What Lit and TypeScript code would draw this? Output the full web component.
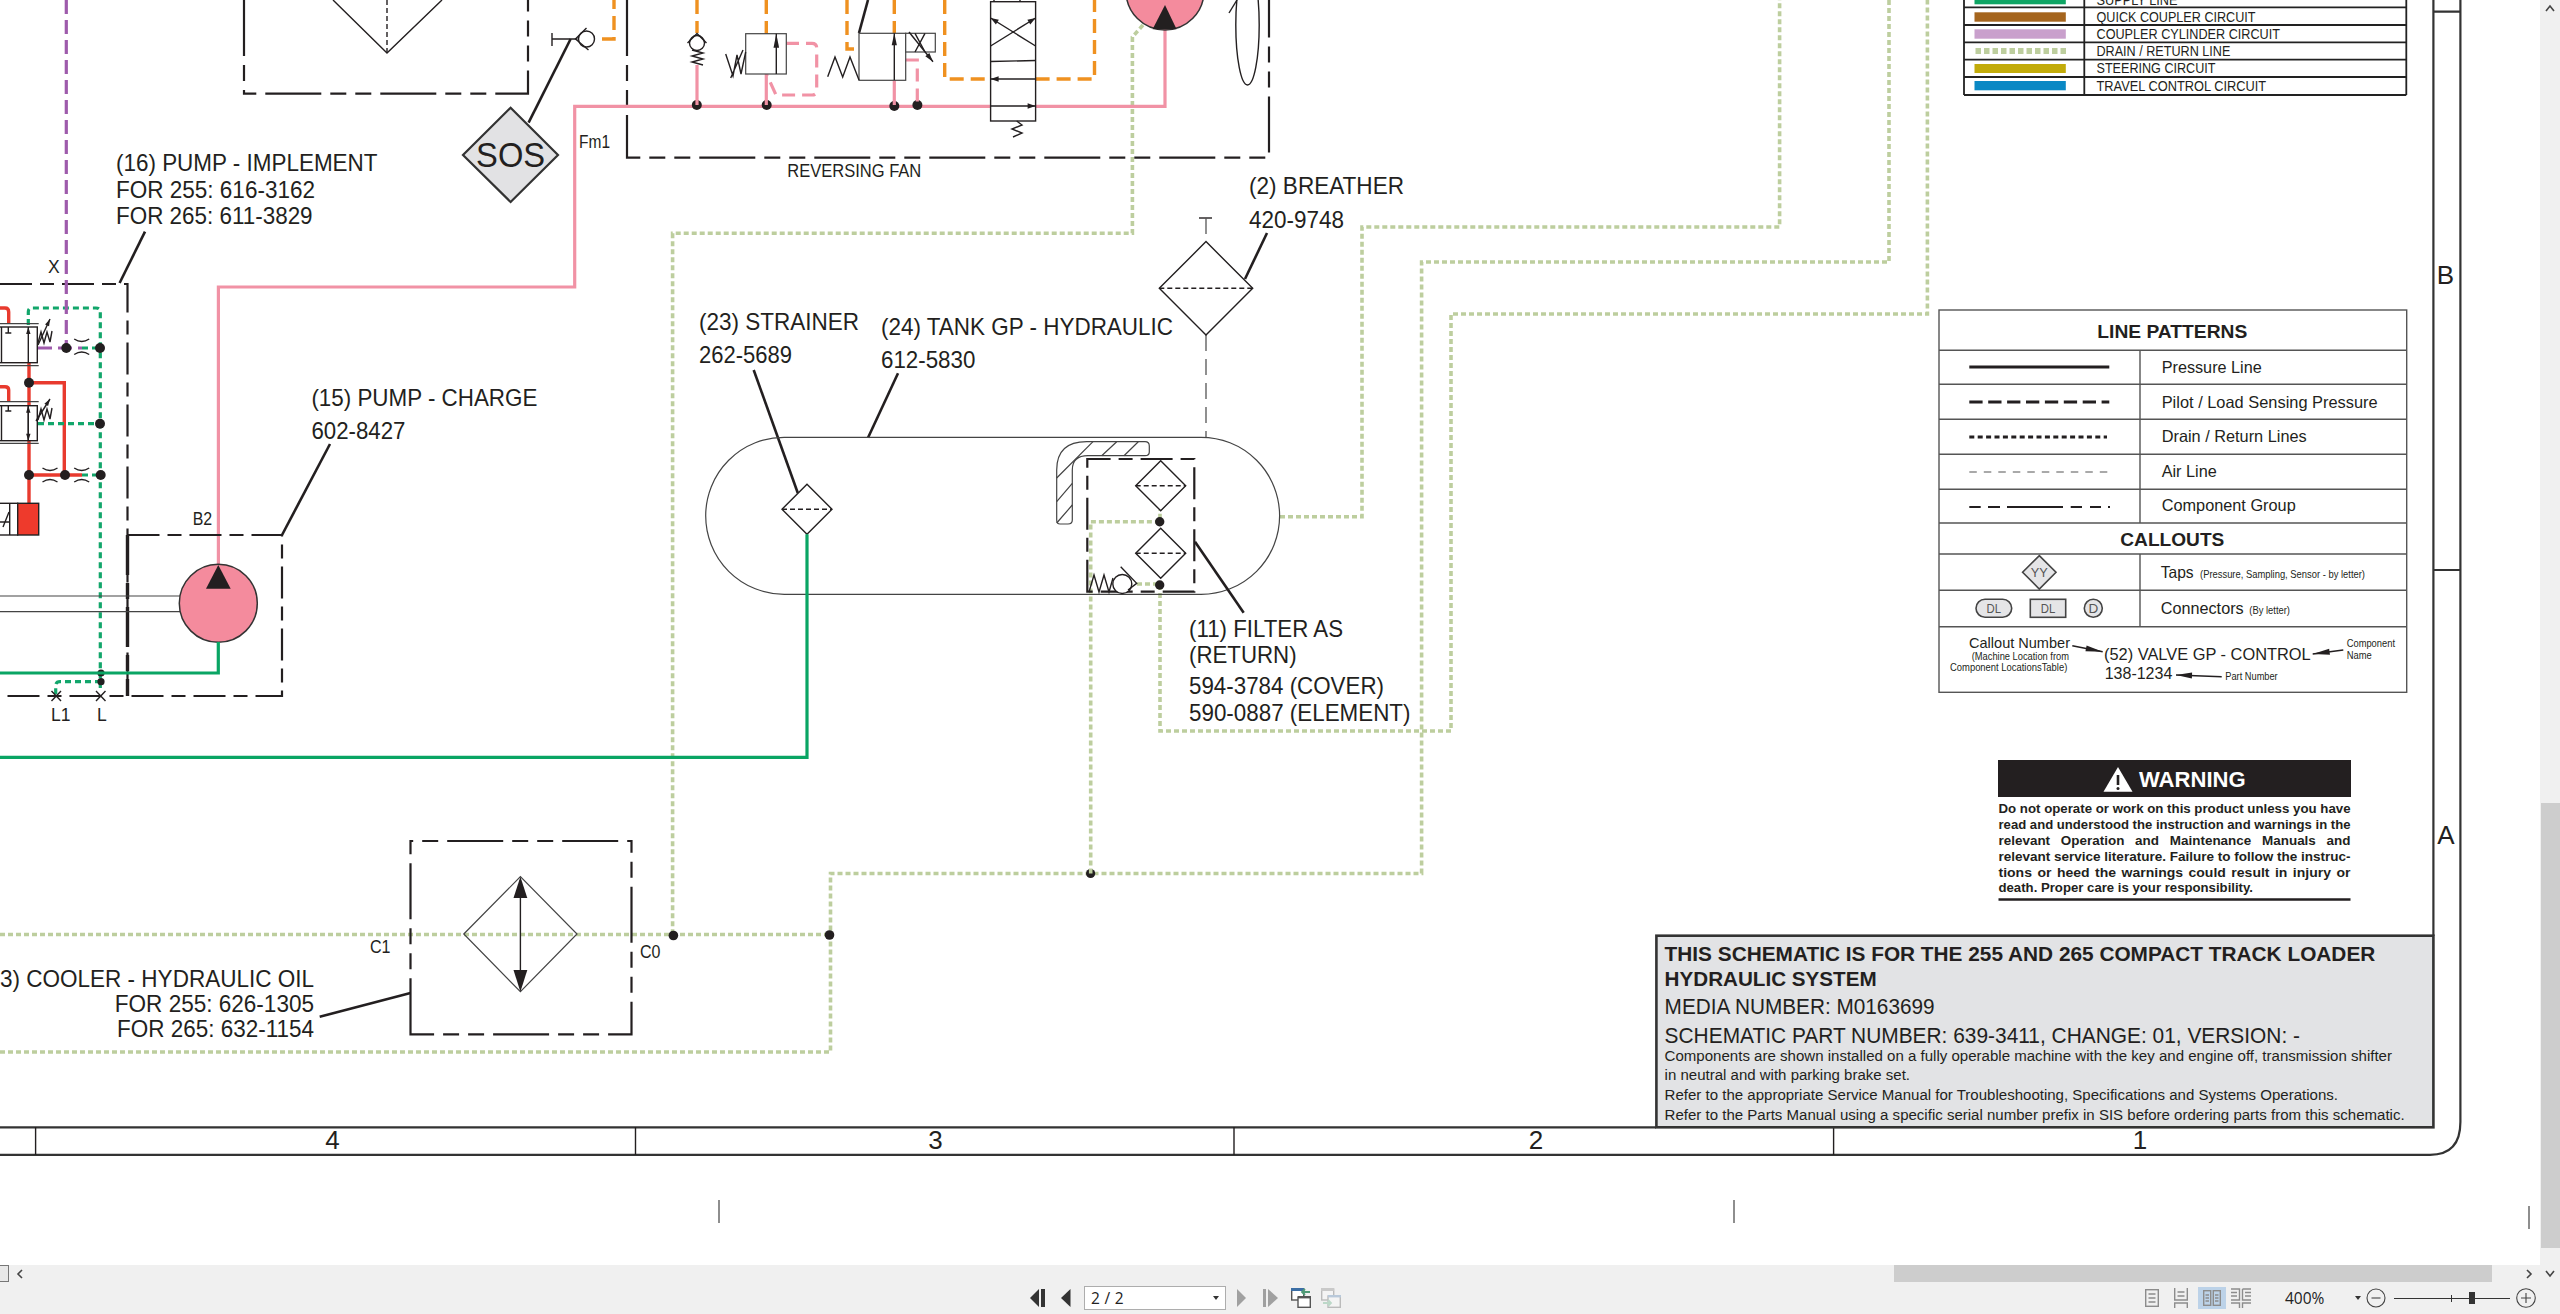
import { LitElement, css, html, svg } from 'lit';
import { customElement } from 'lit/decorators.js';
import { ifDefined } from 'lit/directives/if-defined.js';

// small drawing helpers, everything on the sheet is in page pixels
const p = (d: string, cls: string) => svg`<path class=${cls} d=${d}></path>`;
const dot = (x: number, y: number, r = 5) => svg`<circle class="dot" cx=${x} cy=${y} r=${r}></circle>`;
const tri = (points: string, cls = 'solid') => svg`<polygon class=${cls} points=${points}></polygon>`;
const t = (x: number, y: number, text: string, cls: string, len?: number) =>
  svg`<text class=${cls} x=${x} y=${y} textLength=${ifDefined(len)} lengthAdjust="spacingAndGlyphs">${text}</text>`;

const head = (tx: number, ty: number, fx: number, fy: number, len = 9, half = 2.8) => {
  const d = Math.hypot(tx - fx, ty - fy);
  const ux = (tx - fx) / d;
  const uy = (ty - fy) / d;
  const bx = tx - ux * len;
  const by = ty - uy * len;
  return tri(`${tx},${ty} ${bx - uy * half},${by + ux * half} ${bx + uy * half},${by - ux * half}`);
};

const arrow = (tx: number, ty: number, fx: number, fy: number, len = 9, half = 2.8) => svg`
  ${p(`M${fx} ${fy} L${tx} ${ty}`, 'ink')}${head(tx, ty, fx, fy, len, half)}`;

const diamond = (cx: number, cy: number, hw: number, hh: number) => svg`
  ${p(`M${cx - hw} ${cy} L${cx} ${cy - hh} L${cx + hw} ${cy} L${cx} ${cy + hh} Z`, 'ink white')}
  ${p(`M${cx - hw} ${cy} L${cx + hw} ${cy}`, 'ink-dash')}`;

const orifice = (x: number, top: number, bottom: number) =>
  p(`M${x - 7.5} ${top} Q${x} ${top + 5} ${x + 7.5} ${top} M${x - 7.5} ${bottom} Q${x} ${bottom - 5} ${x + 7.5} ${bottom}`, 'ink');

const COLOR_ROWS = [
  { y: 12.3, h: 9.4, cls: 'sw-brown', text: 'QUICK COUPLER CIRCUIT', base: 21.7, len: 159 },
  { y: 29.3, h: 9.4, cls: 'sw-lilac', text: 'COUPLER CYLINDER CIRCUIT', base: 38.7, len: 183.5 },
  { y: 64, h: 9, cls: 'sw-steer', text: 'STEERING CIRCUIT', base: 73, len: 119 },
  { y: 81, h: 9.3, cls: 'sw-travel', text: 'TRAVEL CONTROL CIRCUIT', base: 91, len: 169.6 },
];

const WARNING_LINES = [
  { text: 'Do not operate or work on this product unless you have', base: 813, len: 352, cls: 'warn-txt' },
  { text: 'read and understood the instruction and warnings in the', base: 829, len: 352, cls: 'warn-txt' },
  { text: 'relevant Operation and Maintenance Manuals and', base: 844.5, len: 352, cls: 'warn-txt wide' },
  { text: 'relevant service literature. Failure to follow the instruc-', base: 860.5, len: 352, cls: 'warn-txt' },
  { text: 'tions or heed the warnings could result in injury or', base: 876.5, len: 352, cls: 'warn-txt mid-wide' },
  { text: 'death. Proper care is your responsibility.', base: 892, len: 254.5, cls: 'warn-txt' },
];

@customElement('schematic-sheet')
export class SchematicSheet extends LitElement {
  static override styles = css`
    :host {
      display: block;
      flex: 1;
      min-width: 0;
      background: #fff;
    }

    svg {
      display: block;
    }

    text {
      font-family: 'Liberation Sans', Arial, sans-serif;
      fill: #231f20;
    }

    path {
      fill: none;
    }

    .callout { font-size: 24px; }
    .port { font-size: 17.5px; }
    .sos { font-size: 35px; text-anchor: middle; }
    .end { text-anchor: end; }
    .mid { text-anchor: middle; }
    .zone { font-size: 26px; text-anchor: middle; }
    .row-txt { font-size: 14.2px; }
    .lp-title { font-size: 18px; font-weight: 700; text-anchor: middle; }
    .lp-txt { font-size: 16.5px; }
    .tiny { font-size: 10.4px; }
    .tap { font-size: 13.5px; text-anchor: middle; fill: #555; }
    .call-sm { font-size: 14.6px; }
    .call-md { font-size: 17px; }
    .title-b { font-size: 21px; font-weight: 700; }
    .title-n { font-size: 21.5px; }
    .title-s { font-size: 15.3px; }
    .warn-head { font-size: 22px; font-weight: 700; fill: #fff; }
    .warn-txt { font-size: 13.4px; font-weight: 700; }
    .wide { word-spacing: 7px; }
    .mid-wide { word-spacing: 1.5px; }

    .ink { stroke: #231f20; stroke-width: 1.4; }
    .ink-thin { stroke: #444; stroke-width: 1.2; }
    .ink-dash { stroke: #231f20; stroke-width: 1.4; stroke-dasharray: 5 3; }
    .air { stroke: #555; stroke-width: 1.3; stroke-dasharray: 16 8; }
    .white { fill: #fff; }
    .leader { stroke: #231f20; stroke-width: 2.6; }
    .group { stroke: #231f20; stroke-width: 2.2; stroke-dasharray: 56 9 16 9 16 9; }
    .group-short { stroke: #231f20; stroke-width: 2.2; stroke-dasharray: 32 8 14 8; }
    .group-heavy { stroke: #231f20; stroke-width: 3.4; stroke-dasharray: 40 8 16 8; }
    .frame { stroke: #333; stroke-width: 2.2; }
    .grid { stroke: #555; stroke-width: 1.4; }
    .tbl { stroke: #222; stroke-width: 1.8; }

    .pink { stroke: #f192a5; stroke-width: 3.2; }
    .pink-dash { stroke: #f192a5; stroke-width: 3.2; stroke-dasharray: 13 7; }
    .orange-dash { stroke: #ef9120; stroke-width: 3.4; stroke-dasharray: 14 7; }
    .purple-dash { stroke: #9e5bab; stroke-width: 3.2; stroke-dasharray: 14 6; }
    .green { stroke: #0aa564; stroke-width: 3.2; }
    .green-dot { stroke: #12a66b; stroke-width: 3.2; stroke-dasharray: 6 4; }
    .red { stroke: #e83a2e; stroke-width: 3.4; }
    .drain { stroke: #bdce9e; stroke-width: 3.6; stroke-dasharray: 5 3; }

    .dot, .solid { fill: #231f20; }
    .pump { fill: #f48b9d; stroke: #333; stroke-width: 1.5; }
    .red-box { fill: #ee3a2c; stroke: #222; stroke-width: 1.4; }
    .grey-box { fill: #e2e2e4; stroke: #333; stroke-width: 2.2; }
    .call-box { fill: #e5e5e7; stroke: #444; stroke-width: 1.6; }
    .block { fill: #e2e3e5; stroke: #333; stroke-width: 2.6; }
    .warn-bg { fill: #231f20; }
    .warn-sign { fill: #fff; }

    .sw-green { fill: #0fa564; }
    .sw-brown { fill: #a5651e; }
    .sw-lilac { fill: #c9a0cc; }
    .sw-steer { fill: #c2ab0a; }
    .sw-travel { fill: #0a88c4; }

    .lg-pressure { stroke: #231f20; stroke-width: 3.2; }
    .lg-pilot { stroke: #231f20; stroke-width: 3; stroke-dasharray: 13.3 5.6; }
    .lg-drain { stroke: #231f20; stroke-width: 3; stroke-dasharray: 5 3.4; }
    .lg-air { stroke: #555; stroke-width: 1.1; stroke-dasharray: 7.5 7; }
    .lg-group { stroke: #231f20; stroke-width: 2.2; }
    .lg-dots { stroke: #bdce9e; stroke-width: 6; stroke-dasharray: 5.5 3; }
  `;

  private upperCircuits() {
    return svg`
      ${p('M244 0 L244 93.7 L528 93.7 L528 0', 'group')}
      ${p('M333 0 L387 53 L442 0', 'ink')}
      ${p('M387 0 L387 53', 'ink-dash')}

      ${p('M552 33 L552 46 M552 39 L577.5 39', 'ink')}
      <circle class="ink white" cx="586.5" cy="39" r="8"></circle>
      ${p('M586.5 28 L575.5 39 L588.5 50', 'ink')}
      ${p('M602 39 L614 39 L614 0', 'orange-dash')}
      ${p('M570.6 39 L528.6 122.7', 'leader')}
      ${p('M510.6 107.7 L558 155 L510.6 202 L463 155 Z', 'grey-box')}
      ${t(510.6, 167, 'SOS', 'sos', 69)}
      ${t(579, 148, 'Fm1', 'port', 31)}

      ${p('M627 0 L627 157.7 L1269 157.7 L1269 0', 'group')}
      ${t(787.3, 176.7, 'REVERSING FAN', 'port', 134)}

      ${p('M218.4 565 L218.4 287 L574.7 287 L574.7 106.4 L990.6 106.4', 'pink')}
      ${p('M1035.6 106.4 L1165 106.4 L1165 30', 'pink')}
      ${dot(696.8, 105)}${dot(766.7, 105)}${dot(894.3, 106)}${dot(917.4, 105)}

      <!-- check valve -->
      ${p('M697 0 L697 33', 'orange-dash')}
      ${p('M697 105 L697 65', 'pink')}
      ${p('M692 50 L703 53 L692 56 L703 59 L692 62 L703 65', 'ink')}
      <circle class="ink white" cx="697" cy="43" r="7.5"></circle>
      ${p('M687.5 43 L697 33.5 L706.5 43', 'ink')}

      <!-- relief valve -->
      ${p('M766.3 0 L766.3 34', 'orange-dash')}
      ${p('M766.3 74 L766.3 105', 'pink')}
      ${p('M786 43.3 L812 43.3 Q816.7 43.3 816.7 48 L816.7 90 Q816.7 95 812 95 L776 95 L767 75', 'pink-dash')}
      <rect class="ink-thin white" x="745.7" y="33.7" width="40.6" height="40.3"></rect>
      ${arrow(776.3, 33.7, 776.3, 74, 14, 2.8)}
      ${p('M725.7 54 L733 76 L737 55 L741 74 L745.7 52 M730.7 78 L743 50', 'ink')}

      <!-- solenoid valve -->
      ${p('M847 0 L847 49 L859 49', 'orange-dash')}
      ${p('M894.3 0 L894.3 33', 'orange-dash')}
      ${p('M894.3 80 L894.3 105', 'pink')}
      ${p('M905.7 60 L917.3 60 L917.3 105', 'pink-dash')}
      ${p('M859 33 L868 0', 'leader')}
      <rect class="ink-thin white" x="859" y="33.3" width="46.7" height="47"></rect>
      ${arrow(894.3, 33.3, 894.3, 80, 12, 2.6)}
      ${p('M827.7 76.7 L835 57 L842.7 77 L850 57 L859 80', 'ink')}
      <rect class="ink-thin white" x="905.7" y="33.3" width="29.6" height="18.7"></rect>
      ${p('M915 33.3 L925 52 M925 33.3 L915 52', 'ink')}
      ${arrow(933, 61.7, 909, 32, 9, 2.6)}

      <!-- directional valve -->
      ${p('M944.7 0 L944.7 79 L990.6 79', 'orange-dash')}
      ${p('M1035.6 79 L1094.5 79 L1094.5 0', 'orange-dash')}
      <rect class="ink white" x="990.6" y="1.7" width="45" height="119.3"></rect>
      ${p('M990.6 61.5 L1035.6 60.5', 'ink')}
      ${arrow(1035.6, 18, 990.6, 46, 8, 2.8)}
      ${arrow(990.6, 18, 1035.6, 46, 8, 2.8)}
      ${arrow(990.6, 79, 1035.6, 79, 8, 2.8)}
      ${arrow(1035.6, 106, 990.6, 106, 8, 2.8)}
      ${p('M994 1.7 V0 M1020 1.7 V0', 'ink')}
      ${p('M1016.7 121 L1022 125 L1012 129 L1022 133 L1013 137', 'ink')}

      <!-- fan motor pump and fan -->
      <circle class="pump" cx="1165" cy="-9" r="39"></circle>
      ${tri('1165,5 1152.6,29.3 1176.6,29.3')}
      <ellipse class="ink" fill="none" cx="1247.5" cy="25" rx="11.7" ry="60"></ellipse>
      ${p('M1229 13 L1237 0', 'ink')}
    `;
  }

  private pumpBlock() {
    return svg`
      ${p('M0 284 L127.5 284 L127.5 696', 'group-short')}
      ${p('M127.5 535 L282 535 L282 696 L0 696', 'group-short')}
      ${p('M127.5 535 L127.5 696', 'group-heavy')}
      ${p('M145 231.7 L119.6 283', 'leader')}
      ${p('M282 535 L330 444', 'leader')}

      ${p('M0 308 L5 308 Q8.7 308 8.7 312 L8.7 323', 'red')}
      ${p('M0 386.7 L5 386.7 Q8.7 386.7 8.7 390 L8.7 402', 'red')}
      ${p('M29 362 L29 405 M29 441 L29 503', 'red')}
      ${p('M29 382.7 L64.3 382.7 L64.3 475', 'red')}
      ${p('M29 475 L82 475', 'red')}

      ${p('M28.3 325 L28.3 312 Q28.3 308 32 308 L96 308 Q100.3 308 100.3 312 L100.3 688', 'green-dot')}
      ${p('M38 423.7 L100 423.7', 'green-dot')}
      ${p('M82 348 L100 348', 'green-dot')}
      ${p('M82 475 L100 475', 'green-dot')}
      ${p('M101 681.7 L60 681.7 Q55.7 681.7 55.7 686 L55.7 696', 'green-dot')}
      ${p('M66.3 0 L66.3 348', 'purple-dash')}
      ${p('M38 348 L82 348', 'purple-dash')}

      ${p('M0 323.7 L38.7 323.7 M0 365.7 L38.7 365.7 M0 401.7 L38.7 401.7 M0 443.3 L38.7 443.3', 'ink-thin')}
      <rect class="ink white" x="-2" y="327" width="39.3" height="35.7"></rect>
      <rect class="ink white" x="-2" y="405.7" width="39.3" height="35"></rect>
      ${p('M1.5 327 V362.7 M1.5 405.7 V440.7', 'ink')}
      ${arrow(28.3, 327, 28.3, 362.7, 7, 2.2)}
      ${arrow(28.3, 405.7, 28.3, 440.7, 7, 2.2)}
      ${arrow(28.3, 440.7, 28.3, 405.7, 7, 2.2)}
      ${p('M8.3 327 V333 M5.3 333 H11.3 M8.3 405.7 V411 M5.3 411 H11.3', 'ink')}
      ${p('M38 343 L41 332 L44 343 L47 332 L50 342 L52 331', 'ink')}
      ${arrow(50, 319, 38, 345, 7, 2.2)}
      ${p('M38 420 L41 409 L44 420 L47 409 L50 419 L52 408', 'ink')}
      ${arrow(50, 399, 36, 421, 7, 2.2)}

      <rect class="ink white" x="-2" y="503.3" width="19.7" height="31.7"></rect>
      ${p('M9.7 503.3 V535 M3 527 L9 512 M0 522 H9', 'ink')}
      <rect class="red-box" x="17.7" y="503.3" width="21" height="31.7"></rect>

      ${orifice(81.7, 339, 354.5)}
      ${orifice(50, 468, 482)}
      ${orifice(81.7, 468, 482)}
      ${dot(66.3, 348)}${dot(100, 348)}${dot(29, 382.7)}${dot(100, 423.7)}
      ${dot(29, 475)}${dot(65, 475)}${dot(100.7, 475)}
      ${dot(101, 673, 3.6)}${dot(101, 681.7, 3.6)}

      ${p('M0 596 L180 596 M0 611.7 L180 611.7', 'ink-thin')}
      <circle class="pump" cx="218.3" cy="603.3" r="39"></circle>
      ${tri('218.3,565 206,588.7 230.7,588.7')}
      ${p('M218.3 642 L218.3 673 L0 673', 'green')}

      ${p('M51.5 691 L61 701 M61 691 L51.5 701 M96 691 L105.5 701 M105.5 691 L96 701', 'ink')}
      ${t(48, 273, 'X', 'port')}
      ${t(192.7, 525, 'B2', 'port', 19.5)}
      ${t(51, 721, 'L1', 'port')}
      ${t(97, 721, 'L', 'port')}

      ${t(116, 171, '(16) PUMP - IMPLEMENT', 'callout', 261.5)}
      ${t(116, 198, 'FOR 255: 616-3162', 'callout', 199)}
      ${t(116, 224, 'FOR 265: 611-3829', 'callout', 196.6)}
      ${t(311.4, 405.7, '(15) PUMP - CHARGE', 'callout', 226)}
      ${t(311.4, 439, '602-8427', 'callout', 94)}
    `;
  }

  private tankAndDrains() {
    return svg`
      ${p('M1143 25 L1132.4 37 L1132.4 233.3 L672.6 233.3 L672.6 935', 'drain')}
      ${p('M0 934.5 L830.5 934.5', 'drain')}
      ${p('M0 1052 L830.5 1052 L830.5 873.5 L1421.6 873.5 L1421.6 262 L1889 262 L1889 0', 'drain')}
      ${p('M1280 516.7 L1362 516.7 L1362 227 L1779.6 227 L1779.6 0', 'drain')}
      ${p('M1160 585 L1160 731 L1451 731 L1451 314 L1927.4 314 L1927.4 0', 'drain')}
      ${dot(1090.6, 873.5, 4.6)}${dot(673.4, 935.5, 4.8)}${dot(829.5, 935, 4.8)}

      ${t(1249, 194, '(2) BREATHER', 'callout', 155)}
      ${t(1249, 228, '420-9748', 'callout', 95)}
      ${p('M1199 218 H1212', 'ink')}
      ${p('M1206 218 V241', 'air')}
      ${p('M1206 335 V437', 'air')}
      ${diamond(1206, 288.3, 46.7, 46.7)}
      ${p('M1267 233 L1245 279', 'leader')}

      ${t(699, 330, '(23) STRAINER', 'callout', 160)}
      ${t(699, 363, '262-5689', 'callout', 93)}
      ${t(881, 335, '(24) TANK GP - HYDRAULIC', 'callout', 292)}
      ${t(881, 368, '612-5830', 'callout', 94.4)}
      ${p('M753.7 370 L797.8 493', 'leader')}
      ${p('M898 373.3 L868 437.7', 'leader')}

      <rect class="ink-thin" fill="none" x="705.7" y="437.3" width="573.9" height="157" rx="78.5"></rect>
      ${diamond(807, 509.3, 25, 25)}
      ${p('M807 534.3 L807 757.3 L0 757.3', 'green')}

      <!-- baffle -->
      ${p('M1056.7 470 Q1056.7 441.7 1086.7 441.7 L1145 441.7 Q1149.3 441.7 1149.3 446 L1149.3 452 Q1149.3 455.7 1145 455.7 L1088 455.7 Q1072.3 455.7 1072.3 470 L1072.3 520 Q1072.3 524 1068 524 L1060 524 Q1056.7 524 1056.7 520 Z', 'ink-thin')}
      ${p('M1056.7 478 L1093 441.7 M1056.7 501.7 L1072.3 483.3 M1056.7 523 L1072.3 505 M1101.7 455.7 L1116.7 441.7 M1124 455.7 L1138.3 441.7', 'ink-thin')}

      ${p('M1090.7 873.5 L1090.7 521.7 L1160 521.7 L1160 510', 'drain')}
      ${p('M1137 584 L1160 584', 'drain')}
      ${p('M1087.3 591.7 L1087.3 459 L1194.3 459 L1194.3 591.7 Z', 'group-short')}
      ${diamond(1160.7, 485.7, 25, 25)}
      ${diamond(1160.7, 553.3, 25, 25)}
      ${dot(1159.7, 521.7, 4.7)}${dot(1159.7, 585, 4.7)}
      ${p('M1089 592 L1094 575 L1099 592 L1104 575 L1109 592 L1113 578', 'ink')}
      <circle class="ink white" cx="1122.3" cy="584" r="9.5"></circle>
      ${p('M1120.7 566.7 L1136.7 583.3 L1128 590', 'ink')}
      ${p('M1195 541.7 L1243.7 612.7', 'leader')}

      ${t(1189, 636.7, '(11) FILTER AS', 'callout', 154)}
      ${t(1189, 663.3, '(RETURN)', 'callout', 107.6)}
      ${t(1189, 694, '594-3784 (COVER)', 'callout', 195)}
      ${t(1189, 720.7, '590-0887 (ELEMENT)', 'callout', 221.5)}
    `;
  }

  private cooler() {
    return svg`
      ${p('M410.5 1034.3 L410.5 841 L631.5 841 L631.5 1034.3 Z', 'group')}
      ${p('M463.8 934 L520.4 876.7 L577 934 L520.4 991.7 Z', 'ink-thin')}
      ${p('M520.4 880 V988', 'ink')}
      ${tri('520.4,876.7 513.5,898 527.3,898')}
      ${tri('520.4,991.7 513.5,970 527.3,970')}
      ${t(370, 952.7, 'C1', 'port', 20.5)}
      ${t(640, 958, 'C0', 'port', 20.5)}
      ${t(314, 986.7, '(13) COOLER - HYDRAULIC OIL', 'callout end', 334)}
      ${t(314, 1011.7, 'FOR 255: 626-1305', 'callout end', 199.2)}
      ${t(314, 1037, 'FOR 265: 632-1154', 'callout end', 197)}
      ${p('M319.7 1016.7 L410.5 993', 'leader')}
    `;
  }

  private colorLegend() {
    return svg`
      ${p('M1964 0 V95 M2084.3 0 V95 M2406.3 0 V95', 'tbl')}
      ${p('M1964 7.3 H2406.3 M1964 25 H2406.3 M1964 42.3 H2406.3 M1964 59.7 H2406.3 M1964 77 H2406.3 M1964 95 H2406.3', 'tbl')}
      <rect class="sw-green" x="1974.5" y="-5" width="91.3" height="9.3"></rect>
      ${t(2096.5, 5, 'SUPPLY LINE', 'row-txt', 81)}
      ${COLOR_ROWS.map(
        (r) => svg`
          <rect class=${r.cls} x="1974.5" y=${r.y} width="91.3" height=${r.h}></rect>
          ${t(2096.5, r.base, r.text, 'row-txt', r.len)}
        `
      )}
      ${p('M1975.5 51 H2066', 'lg-dots')}
      ${t(2096.5, 56, 'DRAIN / RETURN LINE', 'row-txt', 133.8)}
    `;
  }

  private patternLegend() {
    const rows = [350.3, 384.3, 419.3, 454.3, 489.3, 523, 554, 590.3, 626.7];
    return svg`
      <rect class="grid" fill="none" x="1939" y="310" width="467.7" height="382.3"></rect>
      ${rows.map((y) => p(`M1939 ${y} H2406.7`, 'grid'))}
      ${p('M2140 350.3 V523 M2140 554 V626.7', 'grid')}
      ${t(2172.3, 338.3, 'LINE PATTERNS', 'lp-title', 150)}
      ${p('M1969.3 367 H2109.3', 'lg-pressure')}
      ${p('M1969.3 402 H2109.3', 'lg-pilot')}
      ${p('M1969.3 437 H2107', 'lg-drain')}
      ${p('M1969.3 472 H2109.3', 'lg-air')}
      ${p('M1969.3 507 H1980.7 M1988 507 H2000 M2007 507 H2063 M2070.7 507 H2082 M2090 507 H2101 M2108 507 H2110', 'lg-group')}
      ${t(2161.7, 372.7, 'Pressure Line', 'lp-txt', 100)}
      ${t(2161.7, 407.7, 'Pilot / Load Sensing Pressure', 'lp-txt', 216)}
      ${t(2161.7, 442, 'Drain / Return Lines', 'lp-txt', 145)}
      ${t(2161.7, 477, 'Air Line', 'lp-txt', 55)}
      ${t(2161.7, 510.7, 'Component Group', 'lp-txt', 134)}

      ${t(2172.3, 546, 'CALLOUTS', 'lp-title', 104)}
      ${p('M2039.3 555.6 L2056 572.3 L2039.3 589 L2022.6 572.3 Z', 'call-box')}
      ${t(2039.3, 577, 'YY', 'tap', 17)}
      ${t(2160.7, 578.3, 'Taps', 'lp-txt', 33)}
      ${t(2200, 578, '(Pressure, Sampling, Sensor - by letter)', 'tiny', 165)}
      <rect class="call-box" x="1976" y="599.3" width="35.7" height="18" rx="9"></rect>
      ${t(1993.8, 613.3, 'DL', 'tap', 14.5)}
      <rect class="call-box" x="2030.3" y="599.3" width="35.4" height="18"></rect>
      ${t(2048, 613.3, 'DL', 'tap', 14.5)}
      <circle class="call-box" cx="2093.3" cy="608.3" r="9"></circle>
      ${t(2093.3, 613.3, 'D', 'tap')}
      ${t(2160.7, 614, 'Connectors', 'lp-txt', 83)}
      ${t(2249.3, 614, '(By letter)', 'tiny', 40.7)}

      ${t(1969, 647.7, 'Callout Number', 'call-sm', 101)}
      ${t(1971.7, 660, '(Machine Location from', 'tiny', 97.3)}
      ${t(1950, 671, 'Component LocationsTable)', 'tiny', 117.3)}
      ${t(2104, 660, '(52) VALVE GP - CONTROL', 'call-md', 206.7)}
      ${t(2104.7, 679, '138-1234', 'call-md', 67.6)}
      ${t(2346.7, 647.3, 'Component', 'tiny', 48.3)}
      ${t(2346.7, 659.3, 'Name', 'tiny', 25)}
      ${t(2225.3, 680, 'Part Number', 'tiny', 52.4)}
      ${arrow(2102.7, 651.7, 2072.3, 645.7, 17, 3)}
      ${arrow(2312.7, 654, 2343.3, 650, 17, 3)}
      ${arrow(2176, 675, 2221.7, 676.7, 16, 3)}
    `;
  }

  private warning() {
    return svg`
      <rect class="warn-bg" x="1998" y="760" width="353" height="37"></rect>
      ${tri('2118,767 2103.5,791.7 2132.5,791.7', 'warn-sign')}
      ${p('M2118 775 V785', 'leader')}
      ${dot(2118, 788.6, 1.5)}
      ${t(2139, 786.7, 'WARNING', 'warn-head', 106.6)}
      ${WARNING_LINES.map((l) => t(1998.5, l.base, l.text, l.cls, l.len))}
      ${p('M1998.5 899.5 H2350.5', 'leader')}
    `;
  }

  private titleBlock() {
    return svg`
      <rect class="block" x="1656.4" y="935.7" width="777" height="191.6"></rect>
      ${t(1664.6, 960.7, 'THIS SCHEMATIC IS FOR THE 255 AND 265 COMPACT TRACK LOADER', 'title-b', 710.7)}
      ${t(1664.6, 986, 'HYDRAULIC SYSTEM', 'title-b', 212)}
      ${t(1664.6, 1014, 'MEDIA NUMBER: M0163699', 'title-n', 270)}
      ${t(1664.6, 1042.7, 'SCHEMATIC PART NUMBER: 639-3411, CHANGE: 01, VERSION: -', 'title-n', 635.4)}
      ${t(1664.6, 1061, 'Components are shown installed on a fully operable machine with the key and engine off, transmission shifter', 'title-s', 727.4)}
      ${t(1664.6, 1080, 'in neutral and with parking brake set.', 'title-s', 245.4)}
      ${t(1664.6, 1100, 'Refer to the appropriate Service Manual for Troubleshooting, Specifications and Systems Operations.', 'title-s', 673.4)}
      ${t(1664.6, 1120, 'Refer to the Parts Manual using a specific serial number prefix in SIS before ordering parts from this schematic.', 'title-s', 740)}
    `;
  }

  private frame() {
    return svg`
      ${p('M0 1127.3 H1656', 'frame')}
      ${p('M0 1154.8 H2430 Q2460.4 1154.8 2460.4 1122 V0', 'frame')}
      ${p('M2433.4 0 V936', 'frame')}
      ${p('M2433 11.7 H2460 M2433 570 H2460', 'frame')}
      ${p('M35.6 1127 V1155 M635.5 1127 V1155 M1234 1127 V1155 M1833.6 1127 V1155', 'ink')}
      ${t(332.4, 1149.3, '4', 'zone')}
      ${t(935.5, 1149.3, '3', 'zone')}
      ${t(1536, 1149.3, '2', 'zone')}
      ${t(2140, 1149.3, '1', 'zone')}
      ${t(2446, 844, 'A', 'zone')}
      ${t(2445.5, 284, 'B', 'zone')}
      ${p('M719 1200 V1223 M1734 1200 V1223 M2529 1206 V1229', 'ink-thin')}
    `;
  }

  override render() {
    return html`
      <svg width="2540" height="1265" viewBox="0 0 2540 1265" xmlns="http://www.w3.org/2000/svg">
        ${this.tankAndDrains()}
        ${this.upperCircuits()}
        ${this.pumpBlock()}
        ${this.cooler()}
        ${this.colorLegend()}
        ${this.patternLegend()}
        ${this.warning()}
        ${this.frame()}
        ${this.titleBlock()}
      </svg>
    `;
  }
}

@customElement('viewer-statusbar')
export class ViewerStatusbar extends LitElement {
  static override styles = css`
    :host {
      display: flex;
      align-items: center;
      height: 32px;
      padding: 0 24px 0 1030px;
      background: #f0f0f0;
      font-family: 'Open Sans', 'Noto Sans', sans-serif;
      color: #222;
    }

    svg {
      display: block;
      flex: none;
    }

    .nav {
      display: flex;
      align-items: center;
    }

    .first { margin-right: 15px; }
    .prev { margin-right: 13px; }
    .next { margin-right: 17px; }
    .last { margin-right: 13px; }
    .swap { margin-right: 10px; }

    .page-box {
      display: flex;
      align-items: center;
      justify-content: space-between;
      box-sizing: border-box;
      width: 142px;
      height: 24px;
      margin-right: 11px;
      padding: 0 6px;
      background: #fff;
      border: 1px solid #adadad;
      font-size: 15.5px;
      letter-spacing: 0.3px;
    }

    .caret {
      width: 0;
      height: 0;
      border-left: 3.5px solid transparent;
      border-right: 3.5px solid transparent;
      border-top: 4px solid #333;
    }

    .views {
      display: flex;
      align-items: center;
      margin-left: auto;
    }

    .view-single { margin-right: 15px; }
    .view-scroll { margin-right: 10px; }

    .view-two {
      display: flex;
      align-items: center;
      justify-content: center;
      width: 28px;
      height: 22px;
      margin-right: 5px;
      background: #bcd2e8;
    }

    .view-split { margin-right: 34px; }

    .zoom-val {
      width: 70px;
      font-size: 15.5px;
    }

    .slider {
      position: relative;
      width: 116px;
      height: 1px;
      margin: 0 6px 0 8px;
      background: #333;
    }

    .slider-tick {
      position: absolute;
      left: 57px;
      top: -3px;
      width: 1px;
      height: 7px;
      background: #333;
    }

    .slider-thumb {
      position: absolute;
      left: 75px;
      top: -6px;
      width: 6px;
      height: 12px;
      background: #333;
    }

    .zoom-caret {
      margin-right: 5px;
    }

    .line { fill: none; stroke: #8c8c8c; stroke-width: 1.4; }
    .round { fill: none; stroke: #444; stroke-width: 1.1; }
    .on { fill: #333; }
    .off { fill: #a0a0a0; }
    .pane { fill: #fff; stroke: #555; stroke-width: 1.4; }
    .pane-off { fill: #f4f4f4; stroke: #bbb; stroke-width: 1.4; }
    .band { fill: #3b6ea5; }
    .band-off { fill: #b9c9da; }
    .arr { fill: none; stroke: #4f9a76; stroke-width: 1.8; }
    .arr-off { fill: none; stroke: #bcd8c8; stroke-width: 1.8; }
  `;

  override render() {
    return html`
      <div class="nav">
        <svg class="first" width="16" height="18" viewBox="0 0 16 18">
          <polygon class="on" points="0,9 9,0 9,18"></polygon><rect class="on" x="11" y="0" width="4" height="18"></rect>
        </svg>
        <svg class="prev" width="10" height="18" viewBox="0 0 10 18"><polygon class="on" points="0,9 9.5,0 9.5,18"></polygon></svg>
        <div class="page-box"><span>2 / 2</span><span class="caret"></span></div>
        <svg class="next" width="9" height="18" viewBox="0 0 9 18"><polygon class="off" points="9,9 0,0 0,18"></polygon></svg>
        <svg class="last" width="15" height="18" viewBox="0 0 15 18">
          <rect class="off" x="0" y="0" width="3" height="18"></rect><polygon class="off" points="15,9 5,0 5,18"></polygon>
        </svg>
        <svg class="swap" width="20" height="20" viewBox="0 0 20 20">
          <rect class="pane" x="0.7" y="1" width="12" height="11"></rect><rect class="band" x="0" y="0" width="13" height="3"></rect>
          <rect class="pane" x="7" y="9" width="12.3" height="10.3"></rect><rect fill="#555" x="7" y="8" width="13" height="2.4"></rect>
          <path class="arr" d="M19 4 H11 M14 1 L11 4 L14 7"></path>
        </svg>
        <svg width="20" height="20" viewBox="0 0 20 20">
          <rect class="pane-off" x="0.7" y="1" width="12" height="11"></rect><rect fill="#c9c9c9" x="0" y="0" width="13" height="3"></rect>
          <rect class="pane-off" x="7" y="8" width="12.3" height="11.3"></rect><rect class="band-off" x="7" y="7" width="13" height="2.4"></rect>
          <path class="arr-off" d="M2 15 H10 M7 12 L10 15 L7 18"></path>
        </svg>
      </div>
      <div class="views">
        <svg class="view-single" width="14" height="18" viewBox="0 0 14 18">
          <rect class="line" x="0.7" y="0.7" width="12.6" height="16.6"></rect><path class="line" d="M3.5 5 H10.5 M3.5 9 H10.5 M3.5 13 H10.5"></path>
        </svg>
        <svg class="view-scroll" width="14" height="20" viewBox="0 0 14 20">
          <path class="line" d="M0.7 0 V12 H13.3 V0 M3.5 4 H10.5 M3.5 8 H10.5 M0.7 20 V15 H13.3 V20"></path>
        </svg>
        <div class="view-two">
          <svg width="18" height="16" viewBox="0 0 18 16">
            <rect class="line" x="0.7" y="0.7" width="7" height="14.6"></rect><rect class="line" x="10.3" y="0.7" width="7" height="14.6"></rect>
            <path class="line" d="M2.5 5 H6 M2.5 8 H6 M2.5 11 H6 M12 5 H15.5 M12 8 H15.5 M12 11 H15.5"></path>
          </svg>
        </div>
        <svg class="view-split" width="20" height="20" viewBox="0 0 20 20">
          <path class="line" d="M0 1 H8.5 V12 H0 M0 4.5 H6 M0 8 H6 M11.5 1 H20 M11.5 1 V12 H20 M14 4.5 H20 M14 8 H20 M0 15 H8.5 V20 M11.5 20 V15 H20"></path>
        </svg>
        <span class="zoom-val">400%</span>
        <span class="caret zoom-caret"></span>
        <svg width="20" height="20" viewBox="0 0 20 20">
          <circle class="round" cx="10" cy="10" r="9"></circle><path class="round" d="M5.5 10 H14.5"></path>
        </svg>
        <div class="slider"><span class="slider-tick"></span><span class="slider-thumb"></span></div>
        <svg width="20" height="20" viewBox="0 0 20 20">
          <circle class="round" cx="10" cy="10" r="9.3"></circle><path class="round" d="M5 10 H15 M10 5 V15"></path>
        </svg>
      </div>
    `;
  }
}

@customElement('app-root')
export class AppRoot extends LitElement {
  static override styles = css`
    :host {
      display: flex;
      flex-direction: column;
      width: 2560px;
      height: 1314px;
      overflow: hidden;
      background: #fff;
    }

    .view {
      display: flex;
      flex: 1;
      min-height: 0;
    }

    .vbar {
      display: flex;
      flex-direction: column;
      width: 20px;
      background: #f0f0f0;
    }

    .vbar-top {
      display: flex;
      justify-content: center;
      height: 803px;
      padding-top: 4px;
      box-sizing: border-box;
    }

    .vbar-thumb {
      height: 445px;
      margin-left: 1px;
      background: #cdcdcd;
    }

    .hbar {
      display: flex;
      align-items: center;
      height: 17px;
      background: #f0f0f0;
    }

    .hbar-stub {
      box-sizing: border-box;
      width: 9px;
      height: 17px;
      background: #e8e8e8;
      border: 1px solid #777;
      border-left: 0;
    }

    .hbar-left {
      display: flex;
      justify-content: center;
      width: 22px;
    }

    .hbar-gap {
      flex: 1;
    }

    .hbar-thumb {
      width: 598px;
      height: 17px;
      background: #cdcdcd;
    }

    .hbar-right {
      display: flex;
      justify-content: flex-end;
      box-sizing: border-box;
      width: 48px;
      padding-right: 7px;
    }

    .hbar-corner {
      display: flex;
      justify-content: center;
      width: 20px;
    }

    .chev {
      fill: none;
      stroke: #444;
      stroke-width: 1.6;
    }
  `;

  override render() {
    return html`
      <div class="view">
        <schematic-sheet></schematic-sheet>
        <div class="vbar">
          <div class="vbar-top">
            <svg width="10" height="8" viewBox="0 0 10 8"><path class="chev" d="M1 7 L5 2 L9 7"></path></svg>
          </div>
          <div class="vbar-thumb"></div>
        </div>
      </div>
      <div class="hbar">
        <div class="hbar-stub"></div>
        <div class="hbar-left">
          <svg width="8" height="10" viewBox="0 0 8 10"><path class="chev" d="M6 1 L2 5 L6 9"></path></svg>
        </div>
        <div class="hbar-gap"></div>
        <div class="hbar-thumb"></div>
        <div class="hbar-right">
          <svg width="8" height="10" viewBox="0 0 8 10"><path class="chev" d="M2 1 L6 5 L2 9"></path></svg>
        </div>
        <div class="hbar-corner">
          <svg width="10" height="8" viewBox="0 0 10 8"><path class="chev" d="M1 1 L5 6 L9 1"></path></svg>
        </div>
      </div>
      <viewer-statusbar></viewer-statusbar>
    `;
  }
}
